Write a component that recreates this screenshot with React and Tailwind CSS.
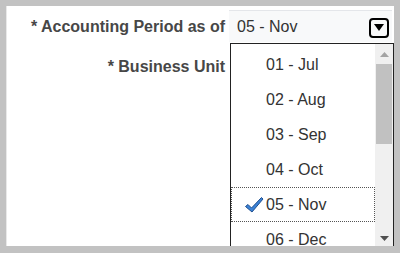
import React from "react";

const months = ["01 - Jul", "02 - Aug", "03 - Sep", "04 - Oct", "05 - Nov", "06 - Dec"];

const Check = () => (
  <svg width="20" height="18" viewBox="0 0 20 18" className="shrink-0">
    <path
      d="M1.5 10.5 L4 8.5 L7.5 12 L17.5 1.5 L19 3 L8 16 Z"
      fill="#3b82d6"
      stroke="#1f4f8f"
      strokeWidth="1"
      strokeLinejoin="round"
    />
  </svg>
);

const App = () => {
  const selected = "05 - Nov";

  return (
    <div
      className="w-[400px] h-[253px] bg-[#c2c2c2] pt-[6px] pl-[6px] pr-[6px] pb-[7px]"
      style={{ fontFamily: '"Liberation Sans", Arial, sans-serif' }}
    >
      <div className="relative w-full h-full bg-white overflow-hidden border-l border-[#e8e8e8]">
        <div className="flex flex-col gap-[8px] pt-[4px]">
          <div className="flex items-center h-[32px]">
            <div className="w-[218px] text-right text-[16px] font-bold text-[#474747] pt-[2px]">
              * Accounting Period as of
            </div>
            <div className="relative ml-[4px] w-[163px] h-[32px] bg-[#f8f9fa] border-t border-[#e4e6ea] flex items-center pl-[8px] text-[16px] text-[#333]">
              {selected}
              <div className="absolute right-[3px] top-[7px] w-[20px] h-[20px] border-2 border-black rounded-[4px] flex items-center justify-center">
                <svg width="10" height="8" viewBox="0 0 10 8">
                  <path d="M0 0 H10 L5 7 Z" fill="#000" />
                </svg>
              </div>
            </div>
          </div>
          <div className="flex items-center h-[32px]">
            <div className="w-[218px] text-right text-[16px] font-bold text-[#474747] pt-[2px]">
              * Business Unit
            </div>
          </div>
        </div>

        {/* dropdown list */}
        <div className="absolute left-[223px] top-[37px] w-[164px] h-[220px] bg-white border border-[#222] flex">
          <div className="flex-1 flex flex-col pt-[3px]">
            {months.map((m) => (
              <div
                key={m}
                className={
                  "h-[35px] shrink-0 flex items-center text-[16px] text-[#333] " +
                  (m === selected ? "border border-dotted border-[#555] pl-[12px] gap-[2px]" : "pl-[35px]")
                }
              >
                {m === selected && <Check />}
                {m}
              </div>
            ))}
          </div>
          <div className="w-[18px] h-full bg-[#f0f0f0] flex flex-col items-center">
            <div className="h-[20px] flex items-center justify-center">
              <svg width="9" height="5" viewBox="0 0 9 5">
                <path d="M0 5 L4.5 0 L9 5 Z" fill="#a3a3a3" />
              </svg>
            </div>
            <div className="w-[16px] h-[80px] bg-[#c1c1c1]" />
            <div className="flex-1" />
            <div className="h-[20px] flex items-start justify-center mb-[6px]">
              <svg width="9" height="5" viewBox="0 0 9 5">
                <path d="M0 0 L9 0 L4.5 5 Z" fill="#505050" />
              </svg>
            </div>
          </div>
        </div>
      </div>
    </div>
  );
};

export default App;
